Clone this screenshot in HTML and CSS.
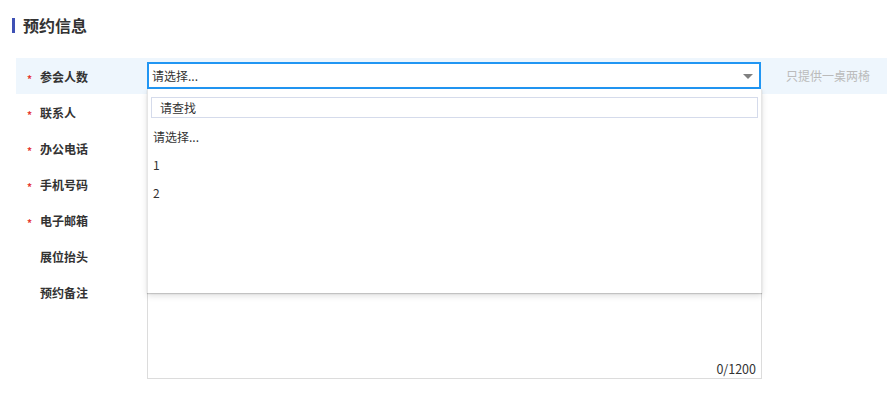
FILE: index.html
```html
<!DOCTYPE html>
<html lang="zh-CN">
<head>
<meta charset="utf-8">
<link rel="stylesheet" href="styles.css">
</head>
<body>
<div class="page">
  <h2 class="section-title">预约信息</h2>
  <div class="form">
    <div class="row active">
      <label class="label"><span class="star">*</span>参会人数</label>
      <div class="field">
        <div class="select">
          <span class="select-text">请选择...</span>
          <span class="arrow"></span>
          <div class="dropdown">
            <div class="search">请查找</div>
            <ul class="options">
              <li>请选择...</li>
              <li>1</li>
              <li>2</li>
            </ul>
          </div>
        </div>
      </div>
      <span class="note">只提供一桌两椅</span>
    </div>
    <div class="row">
      <label class="label"><span class="star">*</span>联系人</label>
      <div class="field"><div class="input"></div></div>
    </div>
    <div class="row">
      <label class="label"><span class="star">*</span>办公电话</label>
      <div class="field"><div class="input"></div></div>
    </div>
    <div class="row">
      <label class="label"><span class="star">*</span>手机号码</label>
      <div class="field"><div class="input"></div></div>
    </div>
    <div class="row">
      <label class="label"><span class="star">*</span>电子邮箱</label>
      <div class="field"><div class="input"></div></div>
    </div>
    <div class="row">
      <label class="label"><span class="star hidden">*</span>展位抬头</label>
      <div class="field"><div class="input"></div></div>
    </div>
    <div class="row row-tall">
      <label class="label"><span class="star hidden">*</span>预约备注</label>
      <div class="field">
        <div class="textarea"><span class="counter">0/1200</span></div>
      </div>
    </div>
  </div>
</div>
</body>
</html>
```

FILE: styles.css
```css
* { box-sizing: border-box; margin: 0; padding: 0; }
body {
  font-family: "Noto Sans CJK SC", "Microsoft YaHei", sans-serif;
  color: #333;
  background: #fff;
}
.page { padding: 0 0 20px 12px; }
.section-title {
  display: flex;
  align-items: center;
  height: 16px;
  margin-top: 17px;
  font-size: 16px;
  font-weight: bold;
  line-height: 16px;
  color: #333;
}
.section-title::before {
  content: "";
  display: block;
  width: 3px;
  height: 15px;
  background: #3f51b5;
  margin-right: 8px;
}
.form { margin-top: 25px; margin-left: 4px; }
.row {
  display: flex;
  height: 36px;
  align-items: flex-start;
  position: relative;
}
.row.row-tall { height: auto; }
.row.active { background: #eef6fd; z-index: 2; }
.label {
  width: 131px;
  flex: none;
  display: flex;
  align-items: center;
  height: 36px;
  padding-left: 10px;
  font-size: 12px;
  font-weight: bold;
  color: #333;
}
.star {
  color: #e53935;
  font-size: 10px;
  font-weight: bold;
  width: 14px;
  padding-top: 4px;
  padding-left: 1px;
}
.star.hidden { visibility: hidden; }
.field { width: 615px; flex: none; padding-top: 4px; }
.select {
  position: relative;
  height: 27px;
  width: 614px;
  border: 2px solid #2196f3;
  background: #fff;
  display: flex;
  align-items: center;
  padding-left: 3px;
  font-size: 12px;
  color: #333;
}
.select-text { flex: 1; }
.arrow {
  width: 0;
  height: 0;
  border-left: 5px solid transparent;
  border-right: 5px solid transparent;
  border-top: 5px solid #808080;
  margin-right: 6px;
  margin-top: 2px;
}
.dropdown {
  position: absolute;
  left: -2px;
  top: 25px;
  width: 615px;
  height: 204px;
  background: #fff;
  border-left: 1px solid #e6e6e6;
  border-right: 1px solid #e6e6e6;
  box-shadow: 0 1px 1px rgba(0, 0, 0, 0.16), 0 3px 6px rgba(0, 0, 0, 0.12);
  padding: 8px 3px 0 3px;
}
.search {
  height: 21px;
  border: 1px solid #d5dbeb;
  font-size: 12px;
  line-height: 19px;
  padding-left: 8px;
  color: #333;
}
.options { list-style: none; margin-top: 5px; }
.options li {
  height: 28px;
  line-height: 28px;
  font-size: 12px;
  padding-left: 2px;
  color: #333;
}
.note {
  margin-left: 24px;
  line-height: 36px;
  font-size: 12px;
  color: #bbb;
}
.input {
  height: 27px;
  width: 614px;
  border: 1px solid #ddd;
}
.textarea {
  position: relative;
  width: 615px;
  height: 101px;
  border: 1px solid #dcdcdc;
}
.counter {
  position: absolute;
  right: 5px;
  bottom: 1px;
  font-size: 12.5px;
  line-height: 16px;
  color: #333;
}
```
